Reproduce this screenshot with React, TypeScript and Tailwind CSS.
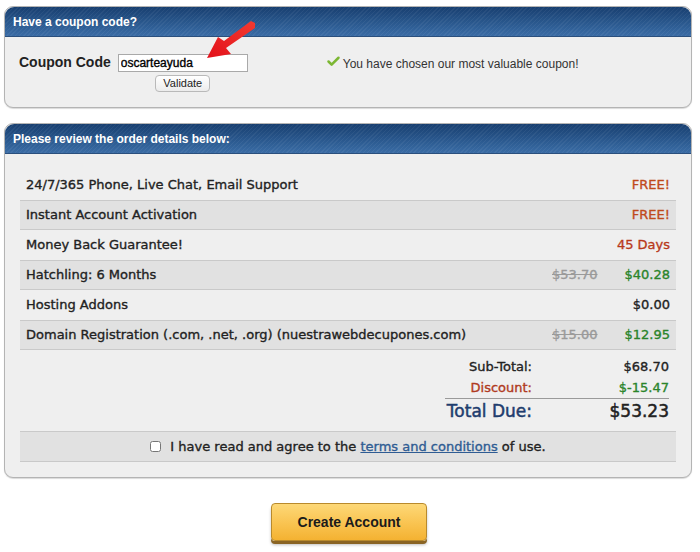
import { Check } from "lucide-react";

const rowFont = "[font-family:'DejaVu_Sans',sans-serif]";

type Item = {
  label: string;
  price: string;
  priceClass: string;
  old?: string;
  shaded?: boolean;
};

const items: Item[] = [
  { label: "24/7/365 Phone, Live Chat, Email Support", price: "FREE!", priceClass: "text-[#c04a1c]" },
  { label: "Instant Account Activation", price: "FREE!", priceClass: "text-[#c04a1c]", shaded: true },
  { label: "Money Back Guarantee!", price: "45 Days", priceClass: "text-[#b8391b]" },
  { label: "Hatchling: 6 Months", price: "$40.28", priceClass: "text-[#2a842a]", old: "$53.70", shaded: true },
  { label: "Hosting Addons", price: "$0.00", priceClass: "text-[#222]" },
  {
    label: "Domain Registration (.com, .net, .org) (nuestrawebdecupones.com)",
    price: "$12.95",
    priceClass: "text-[#2a842a]",
    old: "$15.00",
    shaded: true,
  },
];

function PanelHeader({ title }: { title: string }) {
  return (
    <div className="h-[30px] rounded-t-[9px] flex items-center pl-[8px] text-white text-[12px] font-bold [font-family:'Liberation_Sans',Arial,sans-serif] bg-[repeating-linear-gradient(135deg,rgba(255,255,255,0.05)_0px,rgba(255,255,255,0.05)_1px,transparent_1px,transparent_3px),linear-gradient(#183f70,#2f5f96_70%,#3b6ca5)] border-b border-[#2a4f7d]">
      {title}
    </div>
  );
}

function RedArrow() {
  return (
    <svg className="absolute left-[197px] top-[13px]" width="58" height="42" viewBox="0 0 58 42">
      <defs>
        <linearGradient id="ar" x1="0" y1="1" x2="1" y2="0">
          <stop offset="0" stopColor="#e3101a" />
          <stop offset="1" stopColor="#f23a30" />
        </linearGradient>
      </defs>
      <path d="M53 3 L49 1 L22 21 L16 17 L5 38 L29 34 L24 28 L53 8 Z" fill="url(#ar)" />
    </svg>
  );
}

export default function App() {
  return (
    <div className="w-[700px] h-[552px] bg-white pt-[6px] pl-[4px] [font-family:'Liberation_Sans',Arial,sans-serif]">
      {/* coupon panel */}
      <div className="relative w-[688px] h-[102px] rounded-[9px] border border-[#b4b4b4] bg-[#efefef] shadow-[0_1px_1px_rgba(0,0,0,0.15)]">
        <PanelHeader title="Have a coupon code?" />
        <div className="flex pl-[14px] pt-[17px]">
          <div className="text-[14px] font-bold text-[#222] -mt-[2px]">Coupon Code</div>
          <div className="ml-[7px] flex flex-col items-center">
            <input
              readOnly
              value="oscarteayuda"
              className="w-[130px] h-[18px] bg-white border border-[#a9a9a9] px-[2px] text-[12px] text-black outline-none [-webkit-text-stroke:0.35px_#000]"
            />
            <button className="mt-[3px] h-[17px] px-[7px] rounded-[4px] bg-[linear-gradient(#fff,#ececec)] border border-[#b9b9b9] text-[11px] text-[#222] leading-none">
              Validate
            </button>
          </div>
          <div className="ml-[78px] flex items-start pt-[1px]">
            <Check className="w-[15px] h-[15px] text-[#7cb733] -mt-[1px]" strokeWidth={4} />
            <span className="text-[12px] text-[#333] ml-[2px]">You have chosen our most valuable coupon!</span>
          </div>
        </div>
        <RedArrow />
      </div>

      {/* order panel */}
      <div className="mt-[15px] w-[688px] h-[355px] rounded-[9px] border border-[#b4b4b4] bg-[#efefef] shadow-[0_1px_1px_rgba(0,0,0,0.15)]">
        <PanelHeader title="Please review the order details below:" />
        <div className={`px-[15px] pt-[16px] text-[13px] text-[#222] [-webkit-text-stroke:0.35px_#222] ${rowFont}`}>
          {items.map((it) => (
            <div
              key={it.label}
              className={`flex items-center justify-between pl-[6px] pr-[6px] h-[30px] ${
                it.shaded ? "bg-[#e1e1e1] border-y border-[#c9c9c9]" : ""
              }`}
            >
              <span>{it.label}</span>
              <span className="flex items-center gap-[27px]">
                {it.old && <span className="line-through text-[#9a9a9a] [-webkit-text-stroke:0.35px_#9a9a9a]">{it.old}</span>}
                <span className={`${it.priceClass} [-webkit-text-stroke:0.35px_currentColor]`}>{it.price}</span>
              </span>
            </div>
          ))}

          {/* totals */}
          <div className="flex flex-col items-end pr-[7px] pt-[6px]">
            <div className="flex h-[21px] items-center">
              <span className="w-[110px] text-right">Sub-Total:</span>
              <span className="w-[137px] text-right">$68.70</span>
            </div>
            <div className="flex h-[21px] items-center">
              <span className="w-[110px] text-right text-[#b03a22] [-webkit-text-stroke:0.35px_#b03a22]">Discount:</span>
              <span className="w-[137px] text-right text-[#2a842a] [-webkit-text-stroke:0.35px_#2a842a]">$-15.47</span>
            </div>
            <div className="flex h-[27px] items-center border-t border-[#9a9a9a] w-[224px] justify-end">
              <span className="text-[17px] text-right text-[#1f3d6e] [-webkit-text-stroke:0.5px_#1f3d6e]">Total Due:</span>
              <span className="w-[137px] text-right text-[17px] [-webkit-text-stroke:0.5px_#222]">$53.23</span>
            </div>
          </div>

          {/* agree row */}
          <div className="mt-[6px] h-[31px] bg-[#e1e1e1] border-y border-[#c9c9c9] flex items-center justify-center">
            <input type="checkbox" className="w-[11px] h-[11px] mr-[9px] accent-white" />
            <span>
              I have read and agree to the{" "}
              <a href="#" className="text-[#2f5c93] underline [-webkit-text-stroke:0.35px_#2f5c93]">
                terms and conditions
              </a>{" "}
              of use.
            </span>
          </div>
        </div>
      </div>

      {/* create button */}
      <div className="flex justify-center mt-[25px] pr-[6px]">
        <button className="w-[156px] h-[38px] rounded-[4px] border border-[#b98a2c] bg-[linear-gradient(#fdd877,#f9c350_55%,#f4b232)] shadow-[0_3px_0_#8a6424,0_4px_3px_rgba(0,0,0,0.25)] text-[14px] font-bold text-[#1b1b1b]">
          Create Account
        </button>
      </div>
    </div>
  );
}
